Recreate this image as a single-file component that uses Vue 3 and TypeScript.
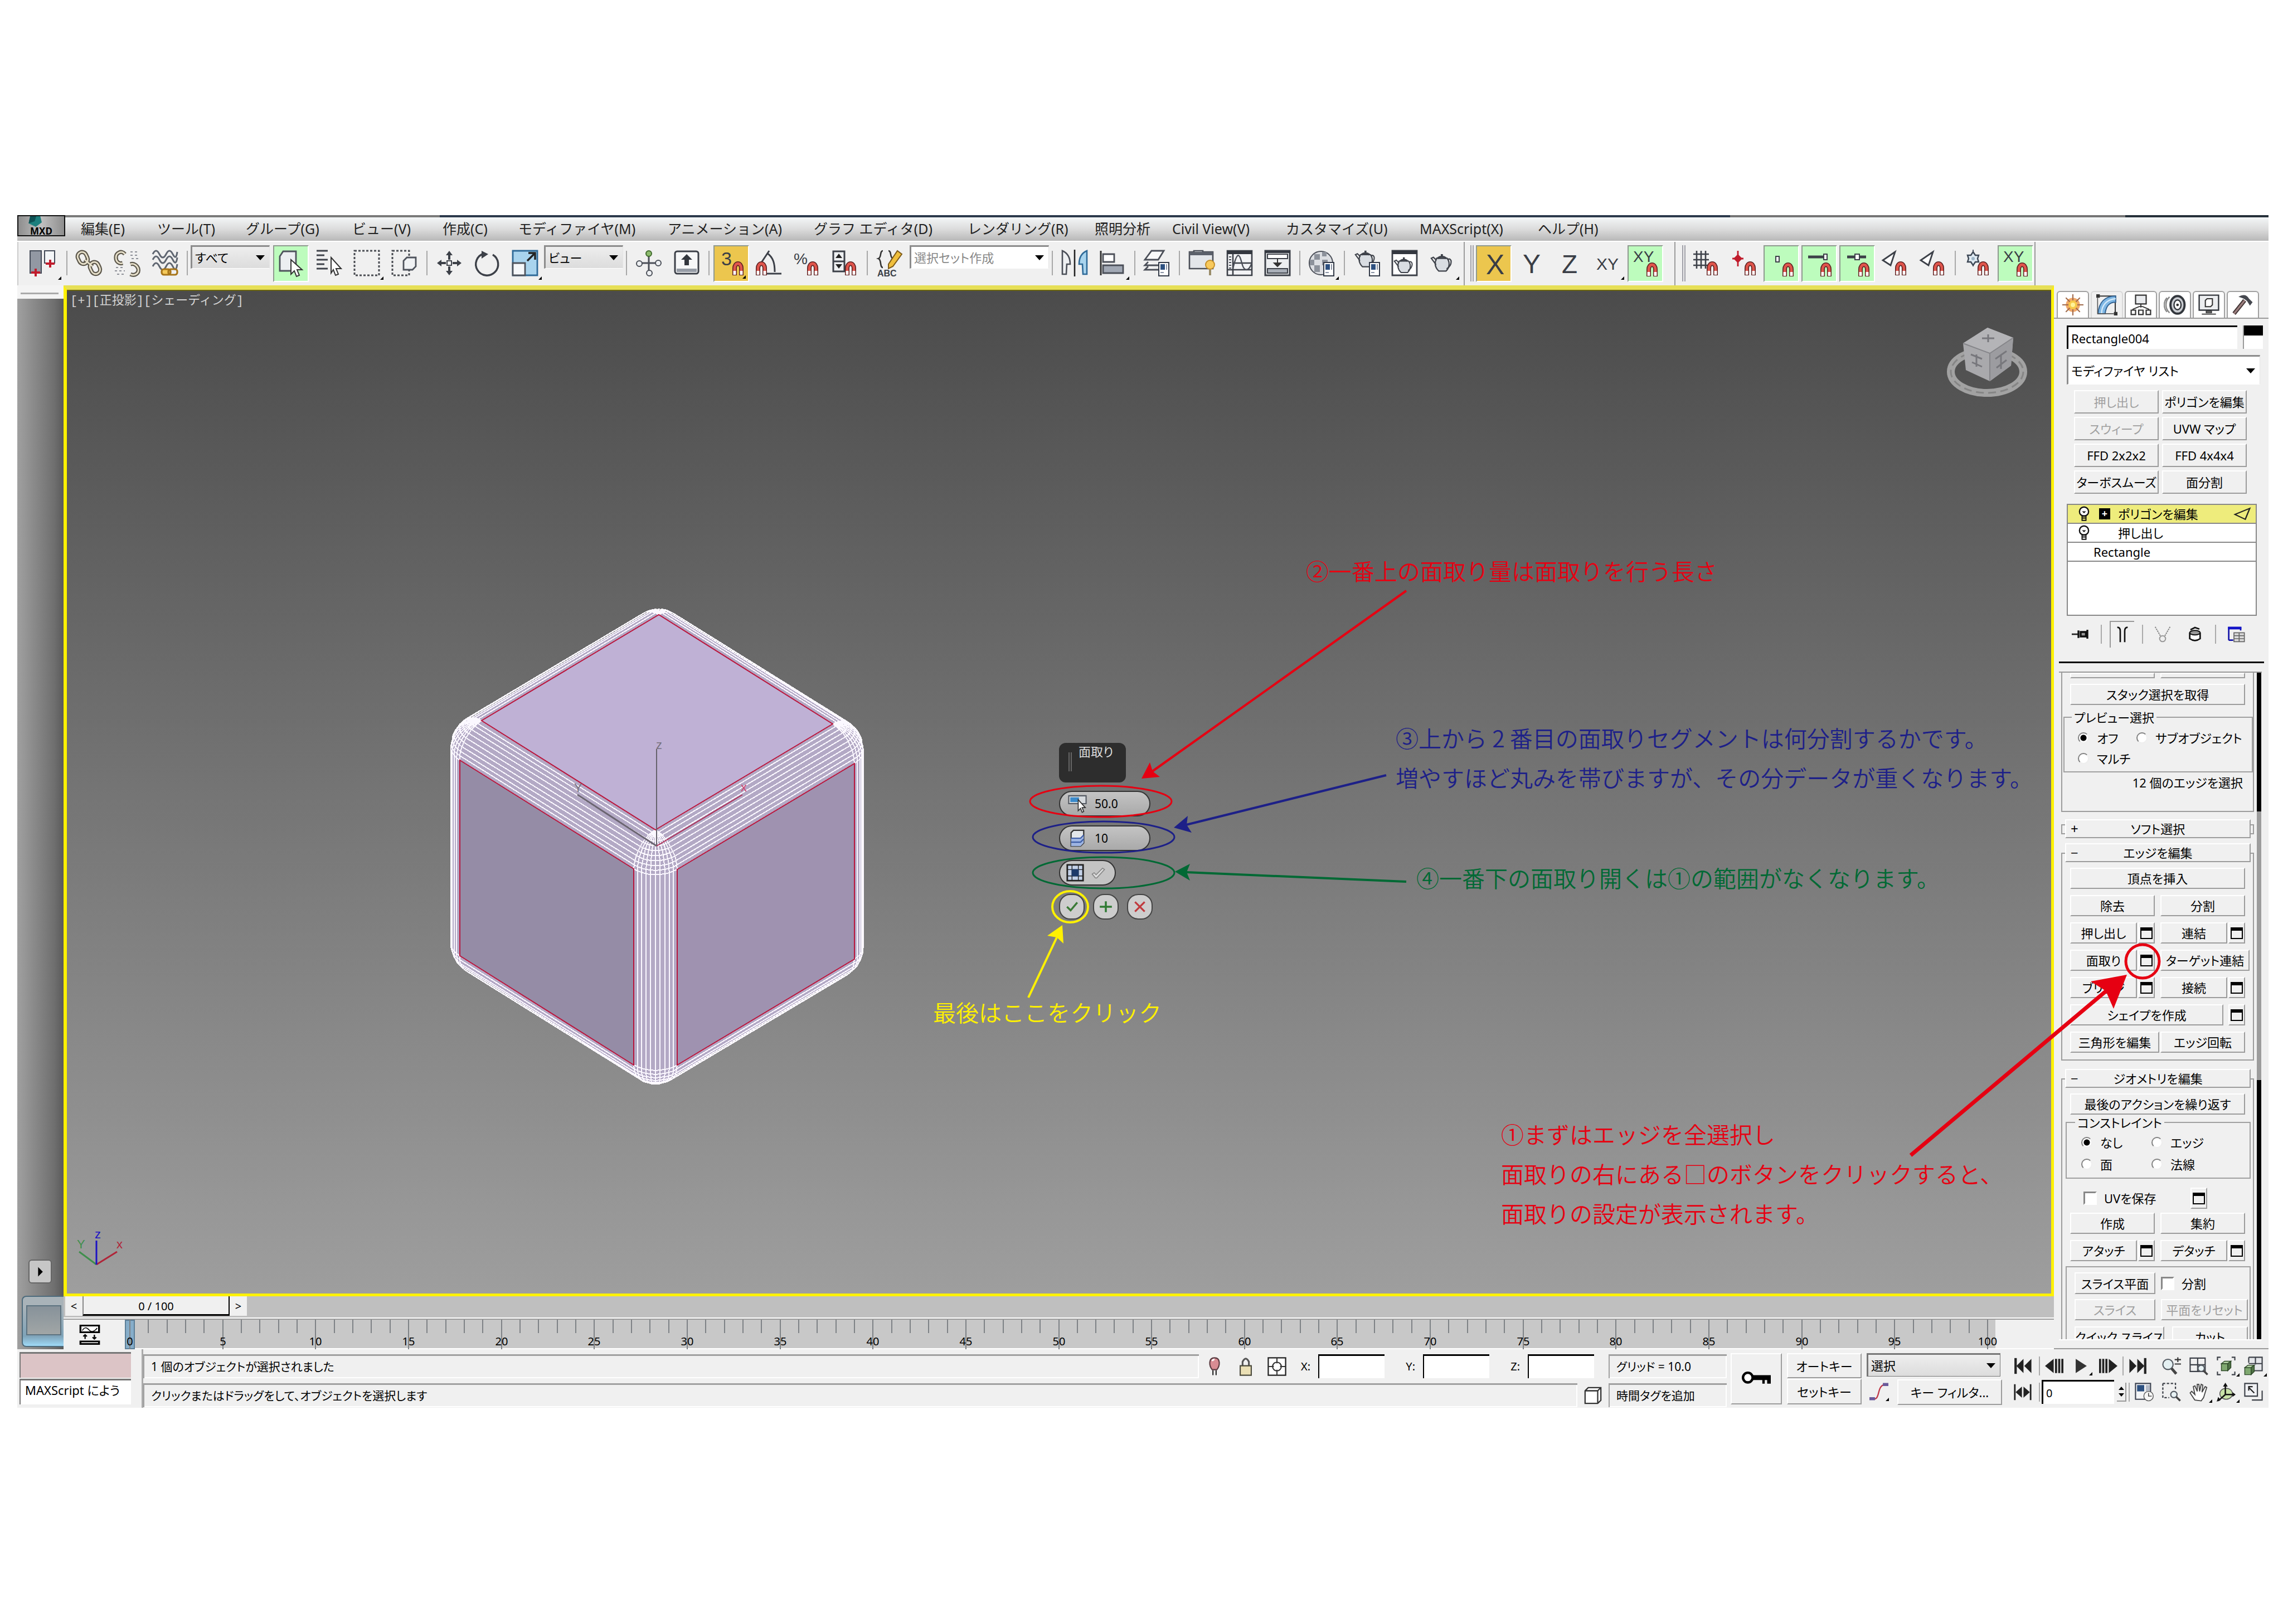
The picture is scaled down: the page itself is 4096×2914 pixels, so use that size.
<script setup lang="ts">
import { ref } from 'vue'

interface Item { icon: string; label: string; on?: 'green' | 'gold'; more?: boolean }

const menus = ['編集(E)', 'ツール(T)', 'グループ(G)', 'ビュー(V)', '作成(C)', 'モディファイヤ(M)', 'アニメーション(A)', 'グラフ エディタ(D)', 'レンダリング(R)', '照明分析', 'Civil View(V)', 'カスタマイズ(U)', 'MAXScript(X)', 'ヘルプ(H)']

const magnet = (x: number, y: number): string =>
  `<g transform="translate(${x} ${y})" fill="none"><path d="M2 12V5.500a3 4 0 0 1 6 0V12" stroke="#5a2020" stroke-width="4"/><path d="M2 11.500V5.500a3 4 0 0 1 6 0v6" stroke="#e0554c" stroke-width="2.400"/><path d="M2 8v3.500M8 8v3.500" stroke="#fff" stroke-width="2.400"/></g>`
const label = (x: number, y: number, size: number, s: string, extra = ''): string =>
  `<text x="${x}" y="${y}" font-size="${size}" fill="#3a3e46" font-family="Liberation Sans, sans-serif" ${extra}>${s}</text>`
const page = (x: number, y: number): string =>
  `<g transform="translate(${x} ${y})"><rect x=".5" y=".5" width="9" height="12" fill="#fff" stroke="#333a48"/><rect x="2" y="2" width="4" height="5" fill="#2d5080"/><path d="M7.500 2v5M2 9.500h3" stroke="#8a93a5"/></g>`
const pot = (x: number, y: number, k: number): string =>
  `<g transform="translate(${x} ${y}) scale(${k})" stroke="#3f434b" stroke-width="1.200" fill="#d9dde2"><path d="M6 5h10c3 4 2 9-1 12H8C4 13 4 9 6 5Z"/><path d="M5.500 11 1 5l2-1 3 3M16.500 6c4-2 5 5-1 9" fill="none"/><path d="M7 5q4-3 8 0M11 3V1" fill="none" stroke-width="2"/></g>`
const lens = (x: number, y: number): string =>
  `<circle cx="${x}" cy="${y}" r="4" fill="#e8f2f4" stroke="#555b63" stroke-width="1.500"/><path d="m${x + 3} ${y + 3} 5 5" stroke="#444" stroke-width="2.500"/>`
const cube = (x: number, y: number): string =>
  `<g transform="translate(${x} ${y})" stroke="#2f4a2a"><path d="M1 4h8v9H1z" fill="#7fa870"/><path d="m1 4 4-3h8L9 4z" fill="#b5d3a6"/><path d="m9 4 4-3v8l-4 4z" fill="#4f7345"/></g>`

const icons: Record<string, string> = {
  undo: `<path d="M1 1h10v20H1z" fill="#9298a3" stroke="#444b58"/><path d="M14 1h9v11h-9z" fill="#f4f6f8" stroke="#444b58"/><path d="M6 17v7M2 20.500h8M19 9v7M15 12.500h8" stroke="#c01c2c" stroke-width="2"/>`,
  link: `<g fill="none" stroke="#5d584c" stroke-width="3.600"><rect x="2" y="2" width="8" height="11" rx="4" transform="rotate(-25 6 7)"/><rect x="13" y="11" width="8" height="11" rx="4" transform="rotate(-25 17 16)"/><path d="m8 9 7 6"/></g><g fill="none" stroke="#e9e2cc" stroke-width="1.400"><rect x="2" y="2" width="8" height="11" rx="4" transform="rotate(-25 6 7)"/><rect x="13" y="11" width="8" height="11" rx="4" transform="rotate(-25 17 16)"/><path d="m8 9 7 6"/></g>`,
  unlink: `<g fill="none" stroke="#5d584c" stroke-width="3.600"><path d="M10 4C7 0 2 3 2 7s3 6 6 5M15 22c4 2 8-1 7-5-1-3-4-5-7-4"/></g><g fill="none" stroke="#e9e2cc" stroke-width="1.400"><path d="M10 4C7 0 2 3 2 7s3 6 6 5M15 22c4 2 8-1 7-5-1-3-4-5-7-4"/></g><path d="M15 2h8M15 5h7M16 8h7M2 16h8M1 19h9M3 22h7" stroke="#8d9098" stroke-dasharray="2 2"/>`,
  bind: `<path d="M1 4q3-6 6 0t6 0 6 0 4-2M1 9q3-6 6 0t6 0 6 0 4-2M1 15q3-6 6 0t6 0 6 0 4-2" fill="none" stroke="#5f6671" stroke-width="1.500"/><rect x="9" y="17.500" width="8" height="5" rx="2" fill="#f4c95a" stroke="#a8761a" stroke-width="1.600"/><rect x="15" y="17.500" width="8" height="5" rx="2" fill="none" stroke="#a8761a" stroke-width="1.600"/>`,
  select: `<path d="M2 6 5 1.500h11.500V16l-2 3H2z" fill="#eceef1" stroke="#4e535c" stroke-width="1.400"/><path d="m12 9 10 9h-4.500l2 5-2.500 1-2-5-3 3z" fill="#fff" stroke="#333"/>`,
  byname: `<path d="M1 1h10M1 5h7M1 9h10M1 13h7M1 17h10" stroke="#3f434b" stroke-width="1.500"/><path d="m14 7 9 10h-4.500l2 5-2.500 1-2-5-2 3z" fill="#fff" stroke="#333"/>`,
  marquee: `<path d="M1 1h22v22H1z" fill="none" stroke="#4a4d53" stroke-width="1.500" stroke-dasharray="2 1.500"/>`,
  crossing: `<path d="M1 1h15v22H1z" fill="none" stroke="#4a4d53" stroke-width="1.500" stroke-dasharray="2 1.500"/><path d="M11 10l3-3h8v8l-3 3h-8z" fill="#f0f2f4" stroke="#4e535c" stroke-width="1.400"/>`,
  move: `<g fill="#3c4048"><path d="m12 1 3 4h-2v4h-2V5H9zM12 23l3-4h-2v-4h-2v4H9zM1 12l4-3v2h4v2H5v2zM23 12l-4-3v2h-4v2h4v2z"/></g><path d="M10 10h4v4h-4z" fill="#fff" stroke="#3c4048"/>`,
  rotate: `<path d="M9 3.500a10 10 0 1 0 8 1" fill="none" stroke="#3c4048" stroke-width="1.700"/><path d="M7 1v7l6-4z" fill="#3c4048"/>`,
  scale: `<path d="M1 1h22v22H1z" fill="#a9d4ee" stroke="#2f6a98" stroke-width="1.400"/><path d="M1 12h11v11H1z" fill="#f6f8fa" stroke="#4e535c" stroke-width="1.400"/><path d="m14 10 6-6m-5-1h6v6" fill="none" stroke="#222" stroke-width="1.700"/>`,
  pivot: `<path d="M12 5v15M5 12h14" stroke="#4b4f58" stroke-width="1.500"/><circle cx="12" cy="3.500" r="2.500" fill="#8dbb6d" stroke="#3f6a2c"/><g fill="#eef0f3" stroke="#4b4f58"><circle cx="3.500" cy="12.500" r="2.500"/><circle cx="20.500" cy="12" r="2.500"/><circle cx="12.500" cy="21" r="2.500"/></g>`,
  keyboard: `<rect x="1.500" y="1.500" width="21" height="20" rx="2" fill="#f6f7f8" stroke="#3c4048" stroke-width="1.500"/><path d="M3 17h18v3H3z" fill="#969ca6"/><path d="m12 4 5 5h-3v5h-4V9H7z" fill="#33373e"/>`,
  snap3: label(3, 14, 17, '3') + magnet(13, 11),
  angle: `<path d="M4 13 12 1M10 3c6 4 7 10 7 17M9 21.500h14" stroke="#3c4048" stroke-width="1.500" fill="none"/>` + magnet(0, 11),
  percent: label(0, 13, 14, '%') + magnet(12, 11),
  spinner: `<path d="M1.500 1.500h10v18h-10zM1.500 10.500h10" fill="#eef0f2" stroke="#3c4048" stroke-width="1.500"/><path d="m6.500 3.500 3 4h-6zM6.500 17l3-4h-6z" fill="#222"/>` + magnet(12, 11),
  named: `<path d="M6 1C3 1 5 7 2 8c3 1 1 8 4 8M11 1c3 0 1 6 4 7-3 1-1 8-4 8" fill="none" stroke="#333" stroke-width="1.300"/><path d="m11 13 8-12 4 3-8 11-4 2z" fill="#f0bf3c" stroke="#7d5a18"/>` + label(1, 24, 8, 'ABC', 'font-weight="bold"'),
  mirror: `<path d="M1 1q7 3 7 12H5l-.500 9H1z" fill="#eef0f2" stroke="#4b4f58" stroke-width="1.300"/><path d="M23 1q-7 3-7 12h3l.500 9H23z" fill="#a9d4ee" stroke="#2f6a98" stroke-width="1.300"/><path d="M12 0v24" stroke="#222" stroke-width="1.300"/>`,
  align: `<path d="M1.500 1v22" stroke="#333" stroke-width="1.500"/><path d="M3.500 4h10v7h-10z" fill="#fff" stroke="#4b4f58" stroke-width="1.400"/><path d="M3.500 14h18v7h-18z" fill="#a1a8b4" stroke="#4b4f58" stroke-width="1.400"/>`,
  layers: `<path d="m1 9 6-8h11l-5 8zM4 11l-3 3h12M4 15l-3 3h12" fill="#fafafa" stroke="#4b4f58" stroke-width="1.400"/>` + page(13, 11),
  ribbon: `<path d="M1 2h4V1h8v1h9v15H1z" fill="#e3e6ea" stroke="#4b4f58" stroke-width="1.300"/><path d="M1 2h21v3H1z" fill="#5b606a"/><circle cx="19.500" cy="13.500" r="4" fill="#f8c95c" stroke="#c48f2a"/><path d="M19.500 18v5" stroke="#9a8c6a" stroke-width="2"/>`,
  curve: `<path d="M1 1h22v22H1zM6 4v19M1 18h22M6 12h17" fill="#f2f3f5" stroke="#3c4048" stroke-width="1.300"/><path d="M1 1h22v3H1z" fill="#33373f"/><path d="M6 17C10 0 12 4 14 12s6 8 9 0" fill="none" stroke="#4b4f58" stroke-width="1.200"/><path d="M3.500 6v11" stroke="#4b4f58" stroke-width="2" stroke-dasharray="1 1.500"/>`,
  schematic: `<path d="M1 1h22v22H1z" fill="#eceef0" stroke="#3c4048" stroke-width="1.500"/><path d="M1 1h22v2H1z" fill="#33373f"/><path d="M3 4h18v4H3z" fill="#fff" stroke="#3c4048"/><path d="M3 17h18v4H3z" fill="#a9afb8" stroke="#3c4048"/><path d="M12 8v6m-3-2h6l-3 3z" fill="#333" stroke="#333"/>`,
  material: `<circle cx="11" cy="12" r="10.500" fill="#dcdee2" stroke="#4b4f58"/><path d="M5 4h5v5H5zM12 9h5v5h-5zM5 14h5v6H5zM12 2h4v4h-4zM1 9h4v5H1z" fill="#8d929b"/>` + page(13, 11),
  rsetup: pot(1, 0, 0.9) + page(14, 11),
  rframe: `<path d="M1 1h22v22H1z" fill="#fff" stroke="#3c4048" stroke-width="1.400"/><path d="M1 1h22v3H1z" fill="#33373f"/>` + pot(2, 6, 0.85),
  render: pot(1, 3, 0.95),
  axX: label(5, 22, 25, 'X'),
  axY: label(4, 21, 24, 'Y'),
  axZ: label(5, 21, 23, 'Z'),
  axXY: label(2, 18, 15, 'XY'),
  xysnap: label(1, 11, 14, 'XY') + magnet(13, 12),
  grid: `<path d="M1 4h14M1 9h14M1 14h14M4 1v16M8 1v16M12 1v16" stroke="#3c4048" stroke-width="1.300"/>` + magnet(13, 11),
  pivotsnap: `<path d="M7 1v14M2 8h10" stroke="#c01c2c" stroke-width="1.400"/><path d="m7 4 4 4-4 4-4-4z" fill="#c01c2c"/>` + magnet(13, 11),
  vertex: `<path d="M7 6h3v5H7z" fill="#fff" stroke="#3c4048"/>` + magnet(13, 12),
  endpoint: `<path d="M2 6.500h14" stroke="#3c4048" stroke-width="2.500"/><path d="M16 4h3v5h-3z" fill="#fff" stroke="#3c4048"/>` + magnet(13, 12),
  midpoint: `<path d="M3 6.500h17" stroke="#3c4048" stroke-width="2.500"/><path d="M10 4h4v5h-4z" fill="#fff" stroke="#3c4048"/>` + magnet(13, 12),
  face: `<path d="M12 2 1 9.500l7 4.500z" fill="#fff" stroke="#3c4048" stroke-width="1.400"/>` + magnet(12, 11),
  freeze: `<path d="M8 0v15" stroke="#4b5563"/><path d="m8 2 2 3h3l-1 3 1 3h-3l-2 3-2-3H3l1-3-1-3h3z" fill="#dfeaf2" stroke="#3c4654" stroke-width="1.200"/><circle cx="8" cy="8" r="1.500" fill="#9fb6c8"/>` + magnet(12, 11),
  create: `<circle cx="12" cy="12" r="8" fill="#f0a868"/><path d="M12 0v24M0 12h24M4 4l16 16M20 4 4 20" stroke="#a06a4c" stroke-width="1.300"/><circle cx="12" cy="12" r="5" fill="#f7c948"/><circle cx="12" cy="12" r="2.500" fill="#fff39a"/>`,
  modify: `<path d="M1.500 2h20v20" fill="none" stroke="#333" stroke-width="1.300"/><path d="M2 22C3 9 10 2 22 2v7c-8 0-11 5-12 13z" fill="#7fb7e4" stroke="#2f5f8f" stroke-width="1.200"/><path d="M6 22C6 12 12 6 22 5" stroke="#d6ebfa" stroke-width="1.500" fill="none"/><path d="M0 0h4v4H0zM20 20h4v4h-4z" fill="#333"/><path d="M1.500 4v18H20" stroke="#555" fill="none"/>`,
  hier: `<path d="M6 1h12v10H6z" fill="#e9ebee" stroke="#333" stroke-width="1.400"/><path d="M12 11v4M3 19v-2l7-3h4l7 3v2" fill="none" stroke="#333" stroke-width="1.200"/><path d="M1 18h5v5H1zM9.500 18h5v5h-5zM18 18h5v5h-5z" fill="#fff" stroke="#333" stroke-width="1.400"/>`,
  motion: `<path d="M6 3a12 12 0 0 0 0 18M3 4a12 12 0 0 0 0 16" stroke="#888" fill="none" stroke-width="1.500"/><ellipse cx="15" cy="12" rx="8" ry="10" fill="#c9ccd1" stroke="#33373d" stroke-width="2.500"/><ellipse cx="15" cy="12" rx="4" ry="5.500" fill="#fff" stroke="#33373d" stroke-width="1.500"/><circle cx="15" cy="12" r="1.500" fill="#333"/>`,
  display: `<path d="M1 1h22v17H1z" fill="#eceef0" stroke="#33373d" stroke-width="1.500"/><path d="M8 7l2-2h6v7l-2 2H8z" fill="#fff" stroke="#333" stroke-width="1.300"/><path d="M9 19h6v2H9zM4 22.500h16" fill="#888" stroke="#333"/>`,
  hammer: `<path d="m2 22 12-15" stroke="#3c2f2f" stroke-width="4.500"/><path d="m2 22 12-15" stroke="#9a7d7d" stroke-width="2.200"/><path d="M7 3c5-3 9-3 12 2l4 4-3 4-3-5c-3-3-6-4-10-5z" fill="#45484f"/>`,
  pin: `<path d="M0 12h9" stroke="#222" stroke-width="2"/><path d="M9 7v10M12 9h7v6h-7zM21 6v12" stroke="#111" stroke-width="2.500" fill="#999"/>`,
  result: `<path d="M5 2q4 0 4 5v15M19 2q-4 0-4 5v15" fill="none" stroke="#111" stroke-width="2"/>`,
  unique: `<path d="m2 2 8 14M22 2l-8 14" stroke="#888" stroke-width="1.500" stroke-dasharray="2 1"/><circle cx="12" cy="18" r="4" fill="#eee" stroke="#999" stroke-width="1.500"/>`,
  trash: `<path d="M5 10v8q7 5 14 0v-8" fill="#fff" stroke="#111" stroke-width="2"/><ellipse cx="12" cy="10" rx="7" ry="3" fill="#999" stroke="#111" stroke-width="1.500"/><path d="m6 6 6-3 6 2" fill="none" stroke="#111" stroke-width="2"/>`,
  config: `<path d="M2 20V3h16v4M2 20h6" fill="none" stroke="#1414a8" stroke-width="2"/><path d="M1 2h18v3.500H1z" fill="#1414c8"/><path d="M9 10h14v12H9zM9 14h14M9 18h14M16 10v12" fill="#ddd" stroke="#666" stroke-width="1.300"/>`,
  bulb: `<circle cx="12" cy="8.500" r="7" fill="#fff" stroke="#111" stroke-width="2"/><path d="M9 15h6v7H9zM9 18.500h6M10 8l2 2 2-2" fill="none" stroke="#111" stroke-width="1.700"/>`,
  toggle: `<path d="m22 3-6 18L2 13z" fill="none" stroke="#222" stroke-width="1.800"/>`,
  first: `<path d="M3 2v20" stroke="#222" stroke-width="3"/><path d="M13 3v18L4 12zM23 3v18l-9-9z" fill="#222"/>`,
  prev: `<path d="M11 3v18L0 12z" fill="#222"/><path d="M14 3v18M18 3v18M22 3v18" stroke="#222" stroke-width="2.600"/>`,
  play: `<path d="M5 3v18l14-9z" fill="#333"/>`,
  next: `<path d="M13 3v18l11-9z" fill="#222"/><path d="M2 3v18M6 3v18M10 3v18" stroke="#222" stroke-width="2.600"/>`,
  last: `<path d="M21 2v20" stroke="#222" stroke-width="3"/><path d="M1 3v18l9-9zM11 3v18l9-9z" fill="#222"/>`,
  keymode: `<path d="M2 2v20M22 2v20" stroke="#222" stroke-width="2"/><path d="M11 5v14l-8-7zM13 5v14l8-7z" fill="#222"/>`,
  timecfg: `<path d="M1 1h19v20H1z" fill="#f3f4f6" stroke="#3c4250" stroke-width="1.500"/><path d="M3 3h9v8H3z" fill="#2d5080"/><path d="M14 3h5v8h-5z" fill="#b4bac6"/><circle cx="17.500" cy="17" r="6" fill="#f6f6f6" stroke="#555"/><path d="M17.500 13v4h4" stroke="#333" fill="none"/>`,
  zoom: `<circle cx="7.500" cy="10" r="6.500" fill="#e4f0f2" stroke="#555b63" stroke-width="1.500"/><path d="m12 15 6 7" stroke="#444" stroke-width="3.500"/><path d="M20 1v6M16 4h8M16 9.500h8" stroke="#333" stroke-width="1.500"/>`,
  zoomall: `<path d="M1 2h19v17H1zM10.500 2v17M1 10.500h19" fill="none" stroke="#3c4048" stroke-width="1.500"/>` + lens(15, 15),
  extents: `<path d="M1 5V1h4M19 1h4v4M1 19v4h4M19 23h4v-4" fill="none" stroke="#3c4048" stroke-width="1.500"/>` + cube(5, 5),
  extall: `<path d="M6 1h17v17H12M14.500 1v9M6 9h17M6 1v7" fill="#e4e6ea" stroke="#3c4048" stroke-width="1.500"/>` + cube(0, 10),
  region: `<path d="M1 1h16v9M1 1v18h8" fill="none" stroke="#3c4048" stroke-width="1.600" stroke-dasharray="3 2"/>` + lens(15, 15),
  pan: `<path d="m7 22-6-9 2-2 4 4L5 5l2-1 3 7V2h2l1 9 2-9 2 1-1 9 4-7 2 1-4 13-3 4z" fill="#fff" stroke="#444" stroke-width="1.300"/>`,
  orbit: `<ellipse cx="12" cy="14" rx="8" ry="7" fill="#c8e2a8" stroke="#555"/><path d="M11 2v13h12M11 15l-9 8" fill="none" stroke="#111" stroke-width="1.800"/><path d="m11 0 3 5H8zM24 15l-4-3v6zM0 24l2-6 3 4z" fill="#111"/>`,
  maximize: `<path d="M10 22h13V10" fill="none" stroke="#3c4048" stroke-width="1.500"/><path d="M1 1h16v16H1z" fill="#f0f1f4" stroke="#3c4048" stroke-width="1.500"/><path d="m13 13-7-7m0 4V5h5" fill="none" stroke="#222" stroke-width="1.500"/>`,
  marker: `<path d="M12 1c-8 0-7 10-3 15h6c4-5 5-15-3-15Z" fill="#d98c93" stroke="#5a3a40" stroke-width="1.500"/><path d="M10 17v6M14 17v6" stroke="#222" stroke-width="1.500"/><path d="M9 5q1-2 3-2" stroke="#fff" stroke-width="2" fill="none"/>`,
  lock: `<path d="M8 12V6q4-8 8 0v6" fill="none" stroke="#555" stroke-width="2.200"/><path d="M5 11h14v12H5z" fill="#eadfb4" stroke="#4b4a3c" stroke-width="1.500"/>`,
  absrel: `<path d="M1 1h22v22H1z" fill="#fff" stroke="#222" stroke-width="1.600"/><circle cx="12" cy="12" r="5.500" fill="none" stroke="#333" stroke-width="1.500"/><path d="M12 1v7M12 16v7M1 12h7M16 12h7" stroke="#333" stroke-width="1.400"/>`,
  isolate: `<path d="M2 6l4-4h16v16l-4 4H2zM2 6h16v16M18 6l4-4" fill="#fff" stroke="#333" stroke-width="1.600"/>`,
  key: `<circle cx="5" cy="11" r="4" fill="#fff" stroke="#000" stroke-width="2"/><path d="M9 9h15v7h-3v-3h-2v3h-2v-3H9z"/>`,
  tangent: `<path d="M3 21c12 4 5-17 17-18" fill="none" stroke="#c03848" stroke-width="1.600"/><path d="M0 19h7v4H0zM17 1h7v4h-7z" fill="#6a5a9a"/>`,
  ministrip: `<path d="M2 1h20v8H2z" fill="#fff" stroke="#000" stroke-width="2"/><path d="M4 7q3-6 7-1t9-2" fill="none" stroke="#000"/><path d="M7 17v-5m-2 2 2-2 2 2M17 12v5m-2-2 2 2 2-2" fill="none" stroke="#000" stroke-width="1.400"/><path d="M2 20h20v3H2z" fill="#fff" stroke="#000" stroke-width="2"/>`,
  amount: `<path d="M1 2h22v10H1z" fill="#d6dade" stroke="#555a63" stroke-width="1.500"/><path d="M3 4h11v6H3z" fill="#3a8acb"/><path d="m13 7 9 10h-4l2 5-2 1-2-5-3 3z" fill="#fff" stroke="#333" stroke-width="1.200"/>`,
  segs: `<path d="M4 5l3-3h13v16l-4 4H4z" fill="#e2e6ea" stroke="#333" stroke-width="1.600"/><path d="M4 12h12l4-3v9l-4 4H4z" fill="#9db4e2"/><path d="M4 12h12l4-4M4 17h12l4-4" fill="none" stroke="#3b5ba5" stroke-width="1.500"/>`,
  open: `<path d="M2 2h20v20H2z" fill="#c3d1e8" stroke="#222" stroke-width="2"/><path d="M8 2v20M16 2v20M2 8h20M2 16h20" stroke="#222"/><path d="M7.500 7.500h9v9h-9z" fill="#1d3a6a"/>`,
  ghost: `<path d="m3 14 3-2 3 3L19 5l3 2L10 20H8z" fill="#ddd" stroke="#888" stroke-width="1.400"/>`,
  ok: `<path d="m4 12 6 6L21 5" fill="none" stroke="#3a7a36" stroke-width="3.200"/>`,
  plus: `<path d="M12 3v18M2 12h20" stroke="#2f7a33" stroke-width="3.200"/>`,
  cancel: `<path d="m4 4 16 16M20 4 4 20" stroke="#c0393d" stroke-width="3"/>`,
}

const t = (icon: string, label: string, on?: 'green' | 'gold', more?: boolean): Item => ({ icon, label, on, more })
const g1 = [t('link', 'リンク'), t('unlink', 'リンク解除'), t('bind', 'バインド')]
const g2 = [t('select', '選択', 'green'), t('byname', '名前で選択'), t('marquee', '矩形', undefined, true), t('crossing', '交差')]
const g3 = [t('move', '移動'), t('rotate', '回転'), t('scale', 'スケール', undefined, true)]
const g4 = [t('pivot', '基点'), t('keyboard', 'キーボード')]
const g5 = [t('snap3', 'スナップ', 'gold', true), t('angle', '角度'), t('percent', 'パーセント'), t('spinner', 'スピナー')]
const tail: Item[][] = [
  [t('mirror', 'ミラー'), t('align', '位置合わせ', undefined, true)],
  [t('layers', 'レイヤ')],
  [t('ribbon', 'リボン'), t('curve', 'カーブ'), t('schematic', 'スケマティック')],
  [t('material', 'マテリアル', undefined, true)],
  [t('rsetup', 'レンダリング設定'), t('rframe', 'フレーム'), t('render', 'レンダリング', undefined, true)],
]
const axes = [t('axX', 'X 軸', 'gold'), t('axY', 'Y 軸'), t('axZ', 'Z 軸'), t('axXY', 'XY 平面', undefined, true), t('xysnap', 'XY スナップ', 'green')]
const snaps = [t('grid', 'グリッド'), t('pivotsnap', '基点'), t('vertex', '頂点', 'green'), t('endpoint', '端点', 'green'), t('midpoint', '中点', 'green'), t('face', '面'), t('face', '面の中心')]
const snaps2 = [t('freeze', 'フリーズ'), t('xysnap', '軸コンストレイント', 'green')]

const tabs = ['create', 'modify', 'hier', 'motion', 'display', 'hammer']
const modButtons = [['押し出し', true], ['ポリゴンを編集', false], ['スウィープ', true], ['UVW マップ', false], ['FFD 2x2x2', false], ['FFD 4x4x4', false], ['ターボスムーズ', false], ['面分割', false]] as [string, boolean][]
const preview = ref('off')
const constraint = ref('none')
const frame = ref('0')
const objectName = ref('Rectangle004')

const ticks = Array.from({ length: 101 }, (_, i) => ({ i, x: Math.round(233 + i * 33.33), major: i % 5 === 0 }))

/* Wireframe of the filleted box: orthographic projection, front-facing lines only. */
type V = [number, number, number]
const half: V = [224, 224, 205]
const R = 55
const project = (p: V): string => {
  const x = 1179 + 0.71 * p[0] - 0.698 * p[1]
  const y = 1519 - 0.424 * p[0] - 0.436 * p[1] - 0.8573 * p[2]
  return `${Math.round(x)} ${Math.round(y)}`
}
const facing = (n: V): boolean => -n[0] - n[1] + n[2] > -0.02
const on = (corner: V, n: V): V => [0, 1, 2].map(i => corner[i] * half[i] + n[i] * R) as V
const lines: string[] = []
const stroke = (corner: V, normals: V[]): void => {
  for (let i = 1; i < normals.length; i++) {
    if (facing(normals[i - 1]) && facing(normals[i])) lines.push(`M${project(on(corner, normals[i - 1]))}L${project(on(corner, normals[i]))}`)
  }
}
const S = 10
for (let axis = 0; axis < 3; axis++) {
  const a = (axis + 1) % 3
  const b = (axis + 2) % 3
  for (const sa of [-1, 1]) for (const sb of [-1, 1]) for (let k = 0; k <= S; k++) {
    const th = (k / S) * Math.PI / 2
    const n: V = [0, 0, 0]
    n[a] = sa * Math.cos(th)
    n[b] = sb * Math.sin(th)
    if (!facing(n)) continue
    const c1: V = [0, 0, 0]
    c1[a] = sa; c1[b] = sb; c1[axis] = -1
    const c2: V = [...c1] as V
    c2[axis] = 1
    lines.push(`M${project(on(c1, n))}L${project(on(c2, n))}`)
  }
}
for (const sx of [-1, 1]) for (const sy of [-1, 1]) for (const sz of [-1, 1]) {
  const at = (lat: number, lon: number): V => {
    const u = (lat / S) * Math.PI / 2
    const v = (lon / S) * Math.PI / 2
    return [sx * Math.cos(u) * Math.cos(v), sy * Math.cos(u) * Math.sin(v), sz * Math.sin(u)]
  }
  const idx = Array.from({ length: S + 1 }, (_, i) => i)
  for (const k of idx) {
    stroke([sx, sy, sz], idx.map(j => at(k, j)))
    stroke([sx, sy, sz], idx.map(j => at(j, k)))
  }
}
const wire = lines.join('')
const poly = (pts: V[]): string => pts.map(project).join(' ')
const [hx, hy, hz] = half
const hull = poly([[-hx, -hy, -hz], [hx, -hy, -hz], [hx, -hy, hz], [hx, hy, hz], [-hx, hy, hz], [-hx, hy, -hz]])
const topFace = poly([[-hx, -hy, hz + R], [hx, -hy, hz + R], [hx, hy, hz + R], [-hx, hy, hz + R]])
const leftFace = poly([[-hx - R, -hy, hz], [-hx - R, hy, hz], [-hx - R, hy, -hz], [-hx - R, -hy, -hz]])
const rightFace = poly([[-hx, -hy - R, hz], [hx, -hy - R, hz], [hx, -hy - R, -hz], [-hx, -hy - R, -hz]])
</script>

<template>
  <div class="page">
    <div class="app">
      <div class="title"><i></i><i></i><i></i><i></i></div>
      <header class="menubar">
        <div class="logo">
          <svg viewBox="0 0 40 22"><path d="M8 0h20l3 12-12 9L5 14z" fill="#1d7f7d" /><path d="M8 0h12l-3 10-12 4z" fill="#0f5154" /></svg>
          <b>MXD</b>
        </div>
        <nav><a v-for="m in menus" :key="m" href="#">{{ m }}</a></nav>
      </header>

      <div class="toolbar">
        <div class="bar bar-main">
          <button class="tool wide" aria-label="元に戻す"><svg viewBox="0 0 24 24" v-html="icons.undo"></svg><em></em></button>
          <s></s>
          <button v-for="i in g1" :key="i.icon" class="tool" :aria-label="i.label"><svg viewBox="0 0 24 24" v-html="icons[i.icon]"></svg></button>
          <s></s>
          <span class="sel filter"><select aria-label="選択フィルタ"><option>すべて</option></select></span>
          <button v-for="i in g2" :key="i.icon" class="tool" :class="i.on" :aria-label="i.label"><svg viewBox="0 0 24 24" v-html="icons[i.icon]"></svg><em v-if="i.more"></em></button>
          <s></s>
          <button v-for="i in g3" :key="i.icon" class="tool" :aria-label="i.label"><svg viewBox="0 0 24 24" v-html="icons[i.icon]"></svg><em v-if="i.more"></em></button>
          <span class="sel coord"><select aria-label="参照座標系"><option>ビュー</option></select></span>
          <s></s>
          <button v-for="i in g4" :key="i.icon" class="tool" :aria-label="i.label"><svg viewBox="0 0 24 24" v-html="icons[i.icon]"></svg></button>
          <s></s>
          <button v-for="i in g5" :key="i.icon" class="tool" :class="i.on" :aria-label="i.label"><svg viewBox="0 0 24 24" v-html="icons[i.icon]"></svg><em v-if="i.more"></em></button>
          <s></s>
          <button class="tool" aria-label="名前付き選択"><svg viewBox="0 0 24 24" v-html="icons.named"></svg></button>
          <span class="sel set"><select aria-label="選択セット"><option>選択セット作成</option></select></span>
          <template v-for="(g, n) in tail" :key="n">
            <s></s>
            <button v-for="i in g" :key="i.icon" class="tool" :aria-label="i.label"><svg viewBox="0 0 24 24" v-html="icons[i.icon]"></svg><em v-if="i.more"></em></button>
          </template>
        </div>
        <div class="bar bar-axes">
          <u></u>
          <button v-for="i in axes" :key="i.icon" class="tool" :class="i.on" :aria-label="i.label"><svg viewBox="0 0 24 24" v-html="icons[i.icon]"></svg><em v-if="i.more"></em></button>
        </div>
        <div class="bar bar-snaps">
          <u></u>
          <button v-for="i in snaps" :key="i.label" class="tool" :class="i.on" :aria-label="i.label"><svg viewBox="0 0 24 24" v-html="icons[i.icon]"></svg></button>
          <s></s>
          <button v-for="i in snaps2" :key="i.icon" class="tool" :class="i.on" :aria-label="i.label"><svg viewBox="0 0 24 24" v-html="icons[i.icon]"></svg></button>
        </div>
      </div>

      <div class="middle">
        <aside class="left">
          <div class="left-top"></div>
          <div class="left-fill"></div>
          <button class="expand" aria-label="展開"><svg viewBox="0 0 20 20"><path d="M7 3v14l7-7z" /></svg></button>
          <div class="thumb"><i></i></div>
        </aside>

        <main class="center">
          <section class="viewport">
            <svg class="scene" viewBox="120 520 3560 1801">
              <polygon :points="hull" fill="#b3a9c5" stroke="#b3a9c5" stroke-width="110" stroke-linejoin="round" />
              <path :d="wire" fill="none" stroke="#fbf8ff" stroke-width="2" shape-rendering="crispEdges" />
              <polygon :points="topFace" fill="#bfb1d5" stroke="#b8143c" stroke-width="2" />
              <polygon :points="leftFace" fill="#958ca6" stroke="#b8143c" stroke-width="2" />
              <polygon :points="rightFace" fill="#9f92b0" stroke="#b8143c" stroke-width="2" />
              <g fill="none" stroke-width="2">
                <path d="M1178 1518V1344" stroke="#66626c" />
                <path d="M1178 1518 1036 1426" stroke="#6a6470" stroke-width="3" />
                <path d="M1178 1518 1332 1426" stroke="#b03058" />
              </g>
              <g class="axis-label">
                <text x="1177" y="1344" fill="#77727e">z</text>
                <text x="1030" y="1421" fill="#77727e">Y</text>
                <text x="1329" y="1420" fill="#d04870">x</text>
              </g>
              <g fill="none" stroke-width="3">
                <path d="M173 2269 142 2246" stroke="#3f8f4c" />
                <path d="M173 2269 210 2246" stroke="#b02438" />
                <path d="M173 2269V2226" stroke="#1c12c4" />
              </g>
              <g class="axis-label">
                <text x="170" y="2222" fill="#1c12c4">z</text>
                <text x="138" y="2240" fill="#3f8f4c">Y</text>
                <text x="209" y="2240" fill="#b02438">x</text>
              </g>
              <g>
                <ellipse cx="3565" cy="667" rx="65" ry="38" fill="none" stroke="#a2a2a2" stroke-width="14" />
                <ellipse cx="3565" cy="667" rx="65" ry="38" fill="none" stroke="#858585" stroke-width="3" stroke-dasharray="14 8" />
                <path d="M3522 616 3566 588 3612 606 3608 656 3570 684 3527 664Z" fill="#a9a9ac" />
                <path d="M3522 616 3566 588 3612 606 3570 634Z" fill="#b4b4b7" />
                <path d="M3570 634 3612 606 3608 656 3570 684Z" fill="#9c9ca0" />
                <path d="M3522 616 3570 634 3612 606M3570 634V684" fill="none" stroke="#858589" stroke-width="2" />
                <path d="M3556 607h22M3567 600v14M3536 636l20 8M3538 650l18 8M3546 636v22M3580 644l20-14M3582 660l18-14M3590 636v26" fill="none" stroke="#77777c" stroke-width="3" />
              </g>
            </svg>
            <p class="vlabel">[+][正投影][シェーディング]</p>
            <form class="caddy" @submit.prevent>
              <div class="caddy-title"><i></i>面取り</div>
              <label class="pill"><svg viewBox="0 0 24 24" v-html="icons.amount"></svg><input value="50.0" aria-label="面取り量"></label>
              <label class="pill"><svg viewBox="0 0 24 24" v-html="icons.segs"></svg><input value="10" aria-label="面取りセグメント"></label>
              <button class="pill short" type="button" aria-label="面取りを開く"><svg viewBox="0 0 24 24" v-html="icons.open"></svg><svg viewBox="0 0 24 24" v-html="icons.ghost"></svg></button>
              <div class="caddy-actions">
                <button aria-label="OK"><svg viewBox="0 0 24 24" v-html="icons.ok"></svg></button>
                <button type="button" aria-label="適用"><svg viewBox="0 0 24 24" v-html="icons.plus"></svg></button>
                <button type="button" aria-label="キャンセル"><svg viewBox="0 0 24 24" v-html="icons.cancel"></svg></button>
              </div>
            </form>
          </section>
          <div class="slider">
            <button class="step" aria-label="前へ">&lt;</button><button class="knob">0 / 100</button><button class="step" aria-label="次へ">&gt;</button>
          </div>
          <div class="track">
            <button class="mini" aria-label="ミニ カーブ エディタ"><svg viewBox="0 0 24 24" preserveAspectRatio="none" v-html="icons.ministrip"></svg></button>
            <svg class="ruler" viewBox="224 2368 3461 53">
              <path d="M224 2368H3580V2419H224Z" fill="#c8c8c8" />
              <path d="M224 2419H3685V2421H224Z" fill="#fff" />
              <path d="M225 2369H241V2420H225Z" fill="#86adc9" stroke="#5d7f98" stroke-width="2" />
              <path v-for="k in ticks" :key="k.i" :d="`M${k.x} 2368V${k.major ? 2421 : 2392}`" stroke="#7e8286" stroke-width="2" />
              <template v-for="k in ticks" :key="k.i"><text v-if="k.major" :x="k.x" y="2414" text-anchor="middle">{{ k.i }}</text></template>
            </svg>
          </div>
        </main>

        <aside class="panel">
          <div class="tabs"><button v-for="n in tabs" :key="n" :class="{ active: n === 'modify' }" :aria-label="n"><svg viewBox="0 0 24 24" v-html="icons[n]"></svg></button></div>
          <div class="name-row"><input v-model="objectName" aria-label="オブジェクト名"><button class="swatch" aria-label="カラー"></button></div>
          <span class="sel modlist"><select aria-label="モディファイヤ"><option>モディファイヤ リスト</option></select></span>
          <div class="mod-grid"><button v-for="b in modButtons" :key="b[0]" class="btn" :disabled="b[1]">{{ b[0] }}</button></div>
          <ul class="stack">
            <li class="cur"><svg viewBox="0 0 24 24" v-html="icons.bulb"></svg><b>+</b><span>ポリゴンを編集</span><svg class="end" viewBox="0 0 24 24" preserveAspectRatio="none" v-html="icons.toggle"></svg></li>
            <li><svg viewBox="0 0 24 24" v-html="icons.bulb"></svg><span class="deep">押し出し</span></li>
            <li><span class="base">Rectangle</span></li>
          </ul>
          <div class="stack-tools">
            <button aria-label="スタックを固定"><svg viewBox="0 0 24 24" v-html="icons.pin"></svg></button><s></s>
            <button class="down" aria-label="最終結果を表示"><svg viewBox="0 0 24 24" v-html="icons.result"></svg></button><s></s>
            <button aria-label="固有にする"><svg viewBox="0 0 24 24" v-html="icons.unique"></svg></button>
            <button aria-label="削除"><svg viewBox="0 0 24 24" v-html="icons.trash"></svg></button><s></s>
            <button aria-label="設定"><svg viewBox="0 0 24 24" v-html="icons.config"></svg></button>
          </div>
          <hr>
          <div class="scroll">
            <div class="rolls">
              <section class="roll first">
                <div class="pair cut"><button class="btn" aria-label="縮小"></button><button class="btn" aria-label="拡大"></button></div>
                <button class="btn full">スタック選択を取得</button>
                <fieldset class="preview">
                  <legend>プレビュー選択</legend>
                  <label><input v-model="preview" type="radio" name="pv" value="off">オフ</label>
                  <label><input v-model="preview" type="radio" name="pv" value="sub">サブオブジェクト</label>
                  <label><input v-model="preview" type="radio" name="pv" value="multi">マルチ</label>
                </fieldset>
                <p>12 個のエッジを選択</p>
              </section>
              <section class="roll closed"><button class="head"><b>+</b>ソフト選択</button></section>
              <section class="roll edges">
                <button class="head"><b>−</b>エッジを編集</button>
                <div class="rows">
                  <button class="btn">頂点を挿入</button>
                  <div class="pair"><button class="btn">除去</button><button class="btn">分割</button></div>
                  <div class="pair"><div class="opt"><button class="btn">押し出し</button><button class="box" aria-label="押し出し設定"></button></div><div class="opt"><button class="btn">連結</button><button class="box" aria-label="連結設定"></button></div></div>
                  <div class="pair"><div class="opt"><button class="btn">面取り</button><button class="box" aria-label="面取り設定"></button></div><button class="btn over">ターゲット連結</button></div>
                  <div class="pair"><div class="opt"><button class="btn">ブリッジ</button><button class="box" aria-label="ブリッジ設定"></button></div><div class="opt"><button class="btn">接続</button><button class="box" aria-label="接続設定"></button></div></div>
                  <div class="opt far"><button class="btn">シェイプを作成</button><button class="box" aria-label="シェイプ設定"></button></div>
                  <div class="pair tri"><button class="btn">三角形を編集</button><button class="btn">エッジ回転</button></div>
                </div>
              </section>
              <section class="roll geo">
                <button class="head"><b>−</b>ジオメトリを編集</button>
                <button class="btn full">最後のアクションを繰り返す</button>
                <fieldset class="constraint">
                  <legend>コンストレイント</legend>
                  <label><input v-model="constraint" type="radio" name="cs" value="none">なし</label>
                  <label><input v-model="constraint" type="radio" name="cs" value="edge">エッジ</label>
                  <label><input v-model="constraint" type="radio" name="cs" value="face">面</label>
                  <label><input v-model="constraint" type="radio" name="cs" value="normal">法線</label>
                </fieldset>
                <div class="uv"><label><input type="checkbox">UVを保存</label><button class="box" aria-label="UV 設定"></button></div>
                <div class="rows">
                  <div class="pair"><button class="btn">作成</button><button class="btn">集約</button></div>
                  <div class="pair"><div class="opt"><button class="btn">アタッチ</button><button class="box" aria-label="アタッチ設定"></button></div><div class="opt"><button class="btn">デタッチ</button><button class="box" aria-label="デタッチ設定"></button></div></div>
                </div>
                <div class="slice">
                  <div class="pair"><button class="btn">スライス平面</button><label><input type="checkbox">分割</label></div>
                  <div class="pair"><button class="btn" disabled>スライス</button><button class="btn" disabled>平面をリセット</button></div>
                  <div class="pair quick"><button class="btn">クイック スライス</button><button class="btn">カット</button></div>
                </div>
              </section>
            </div>
            <div class="scrollbar"><i></i></div>
          </div>
        </aside>
      </div>

      <footer class="status">
        <div class="macro"><div class="pink"></div><div class="white">MAXScript によう</div></div>
        <div class="lines">
          <div class="line">
            <div class="field">1 個のオブジェクトが選択されました</div>
            <button class="ic" aria-label="マーカー"><svg viewBox="0 0 24 24" v-html="icons.marker"></svg></button>
            <button class="ic" aria-label="選択ロック"><svg viewBox="0 0 24 24" v-html="icons.lock"></svg></button>
            <button class="ic" aria-label="絶対モード"><svg viewBox="0 0 24 24" v-html="icons.absrel"></svg></button>
            <label>X:<input></label><label>Y:<input></label><label>Z:<input></label>
          </div>
          <div class="line">
            <div class="field">クリックまたはドラッグをして、オブジェクトを選択します</div>
            <button class="ic" aria-label="分離"><svg viewBox="0 0 24 24" v-html="icons.isolate"></svg></button>
          </div>
        </div>
        <div class="gridinfo"><div class="field">グリッド = 10.0</div><div class="field">時間タグを追加</div></div>
        <button class="btn keybtn" aria-label="キーを設定"><svg viewBox="0 0 24 24" v-html="icons.key"></svg></button>
        <div class="autokey"><button class="btn">オートキー</button><button class="btn">セットキー</button></div>
        <div class="keysel">
          <span class="sel"><select aria-label="キー対象"><option>選択</option></select></span>
          <div><button class="ic" aria-label="接線"><svg viewBox="0 0 24 24" v-html="icons.tangent"></svg><em></em></button><button class="btn">キー フィルタ...</button></div>
        </div>
        <div class="transport">
          <div>
            <button class="ic" aria-label="最初"><svg viewBox="0 0 24 24" v-html="icons.first"></svg></button><s></s>
            <button class="ic" aria-label="前のフレーム"><svg viewBox="0 0 24 24" v-html="icons.prev"></svg></button>
            <button class="ic" aria-label="再生"><svg viewBox="0 0 24 24" v-html="icons.play"></svg><em></em></button>
            <button class="ic" aria-label="次のフレーム"><svg viewBox="0 0 24 24" v-html="icons.next"></svg></button><s></s>
            <button class="ic" aria-label="最後"><svg viewBox="0 0 24 24" v-html="icons.last"></svg></button>
          </div>
          <div>
            <button class="ic" aria-label="キー モード"><svg viewBox="0 0 24 24" v-html="icons.keymode"></svg></button><s></s>
            <input v-model="frame" aria-label="フレーム">
            <button class="spin" aria-label="増減"><svg viewBox="0 0 12 24"><path d="m6 3 5 6H1zM6 21l5-6H1z" /></svg></button><s></s>
            <button class="ic" aria-label="時間設定"><svg viewBox="0 0 24 24" v-html="icons.timecfg"></svg></button>
          </div>
        </div>
        <div class="nav">
          <button v-for="n in ['zoom', 'zoomall', 'extents', 'extall', 'region', 'pan', 'orbit', 'maximize']" :key="n" class="ic" :aria-label="n"><svg viewBox="0 0 24 24" v-html="icons[n]"></svg><em v-if="['extents', 'extall', 'pan', 'orbit'].includes(n)"></em></button>
        </div>
      </footer>
    </div>

    <svg class="notes" viewBox="0 0 4096 2914">
      <g fill="none" stroke-width="3">
        <g stroke="#e60012"><ellipse cx="1975" cy="1438" rx="127" ry="28" /><path d="M2066 1385 2523 1060" stroke-width="4" /></g>
        <g stroke="#1d2088"><ellipse cx="1980" cy="1502" rx="127" ry="28" /><path d="M2128 1480 2487 1391" stroke-width="4" /></g>
        <g stroke="#006934"><ellipse cx="1980" cy="1566" rx="127" ry="28" /><path d="M2128 1565 2523 1582" stroke-width="4" /></g>
        <g stroke="#fff100"><ellipse cx="1920" cy="1627" rx="32" ry="28" stroke-width="4" /><path d="M1896 1682 1845 1790" stroke-width="4" /></g>
        <g stroke="#e60012"><circle cx="3844" cy="1725" r="30" stroke-width="5" /><path d="M3780 1777 3428 2073" stroke-width="7" /></g>
      </g>
      <path d="M2048 1397 2063 1368 2068 1384 2081 1394Z" fill="#e60012" />
      <path d="M2106 1485 2131 1464 2129 1480 2138 1494Z" fill="#1d2088" />
      <path d="M2108 1564 2135 1550 2129 1565 2135 1580Z" fill="#006934" />
      <path d="M1906 1660 1879 1679 1896 1682 1908 1693Z" fill="#fff100" />
      <path d="M3816 1749 3751 1761 3778 1778 3792 1810Z" fill="#e60012" />
      <g class="note" fill="#e60012">
        <text x="2343" y="1041">②一番上の面取り量は面取りを行う長さ</text>
        <text x="2693" y="2052">①まずはエッジを全選択し</text>
        <text x="2693" y="2123">面取りの右にある□のボタンをクリックすると、</text>
        <text x="2693" y="2194">面取りの設定が表示されます。</text>
      </g>
      <g class="note" fill="#1d2088">
        <text x="2504" y="1341">③上から 2 番目の面取りセグメントは何分割するかです。</text>
        <text x="2504" y="1412">増やすほど丸みを帯びますが、その分データが重くなります。</text>
      </g>
      <g class="note" fill="#006934"><text x="2541" y="1592">④一番下の面取り開くは①の範囲がなくなります。</text></g>
      <g class="note" fill="#fff100"><text x="1674" y="1833">最後はここをクリック</text></g>
    </svg>
  </div>
</template>

<style>
body { background: #fff; }
</style>

<style scoped>
*, *::before { box-sizing: border-box; }
.page { position: relative; padding: 386px 26px 388px 31px; font: 22px/28px "Noto Sans", "Noto Sans CJK JP", sans-serif; color: #000; }
.app { background: #f0f0f0; font-feature-settings: "palt"; }
button, input, select, textarea { font: inherit; font-feature-settings: inherit; color: inherit; border: 0; margin: 0; padding: 0; background: none; border-radius: 0; }
button { display: flex; align-items: center; justify-content: center; white-space: nowrap; }
s, u, em, i { text-decoration: none; display: block; flex: none; }

.title { display: flex; height: 4px; }
.title i:nth-child(1) { width: 758px; background: #7a7a7a; }
.title i:nth-child(2) { flex: 1; background: #2c3a4c; }
.title i:nth-child(3) { width: 709px; background: #757575; }
.title i:nth-child(4) { width: 257px; background: #26303a; }

.menubar { display: flex; height: 42px; background: linear-gradient(#f3f6f7, #dcdcdc 50%, #b8b8b8); }
.logo { flex: none; width: 86px; height: 38px; margin-top: -4px; border: 2px solid #111; background: linear-gradient(90deg, #8e8e8e, #c0c0c0 50%, #8e8e8e); text-align: center; font-size: 17px; line-height: 14px; }
.logo svg { display: block; width: 40px; height: 20px; margin-left: 12px; }
.menubar nav { display: grid; flex: 1; align-items: center; padding: 0 0 2px 28px; grid-template-columns: 137px 159px 191px 162px 136px 268px 262px 276px 228px 139px 204px 240px 212px 1fr; font-size: 25px; font-feature-settings: normal; }
.menubar a { color: #222; text-decoration: none; white-space: nowrap; }

.toolbar { display: flex; height: 80px; border-top: 2px solid #fff; }
.bar { display: flex; align-items: flex-start; padding-top: 6px; border-right: 2px solid #9c9c9c; }
.bar-main { width: 2597px; padding-left: 4px; border-left: 2px solid #ccc; }
.bar-axes { width: 378px; padding-left: 10px; }
.bar-snaps { width: 646px; padding-left: 12px; }
.bar > * { flex: none; }
.bar s { width: 12px; height: 44px; margin-top: 10px; background: linear-gradient(90deg, transparent 5px, #a8a8a8 5px, #a8a8a8 7px, transparent 7px); }
.bar u { width: 6px; height: 65px; margin-right: 2px; border: solid #a0a0a8; border-width: 0 2px; }
.tool { position: relative; width: 68px; height: 66px; padding-bottom: 3px; }
.tool svg { width: 50px; height: 48px; overflow: visible; }
.tool.wide { width: 77px; }
em { position: absolute; right: 4px; bottom: 4px; width: 0; height: 0; border: solid transparent; border-width: 0 0 6px 6px; border-bottom-color: #000; }
.green, .gold { width: 64px; margin: 0 2px; border: 2px solid #fff; border-top-color: #8f998f; border-left-color: #8f998f; background: #bdfcbd; }
.gold { background: #ecc64e; }

.sel { position: relative; display: block; background: linear-gradient(#eee, #dcdcdc); border: solid #8c8c8c; border-width: 3px 1px 1px 3px; border-right-color: #e4e4e4; border-bottom-color: #fff; }
.sel select { display: block; width: 100%; height: 100%; appearance: none; padding-left: 5px; }
.sel::after { content: ""; position: absolute; right: 8px; top: 50%; margin-top: -4px; border: solid transparent; border-width: 9px 8px 0; border-top-color: #000; pointer-events: none; }
.filter, .coord { width: 142px; height: 42px; }
.filter { margin-right: 4px; }
.set { width: 250px; height: 42px; margin-left: 2px; background: #fff; color: #888; }

.middle { display: flex; }
.left { display: flex; flex-direction: column; width: 83px; background: linear-gradient(90deg, #a0a0a0, #6f6f6f 80%, #5a5a5a); }
.left-top { height: 24px; background: #f4f4f4 linear-gradient(#aaa, #aaa) 6px 13px / 68px 3px no-repeat; }
.left-fill { flex: 1; }
.expand { width: 42px; height: 43px; margin-left: 20px; border: 2px solid #666; border-radius: 6px; background: #c6c6c6; }
.expand svg { width: 24px; }
.thumb { height: 92px; margin: 22px 0 4px 8px; padding: 15px 4px 20px 6px; border-radius: 8px 0 0 8px; border: 2px solid #4e6b7c; border-right: 0; background: linear-gradient(#a9b3b9 20%, #7fa3b8 80%, #9fdaf8); }
.thumb i { height: 54px; border: 2px solid #5c7280; background: linear-gradient(#87929a, #a1a6a6); }

.center { flex: 1; min-width: 0; }
.viewport { position: relative; height: 1814px; border: solid #fff100; border-width: 8px 5px 5px 6px; border-top-color: #e6df57; background: linear-gradient(#4b4b4b, #9e9e9e); box-shadow: inset 0 2px #6a6410; }
.scene { display: block; width: 100%; height: 100%; }
.axis-label { font: 22px "Liberation Sans", sans-serif; }
.vlabel { position: absolute; left: 6px; top: 7px; margin: 0; font: 22px/28px "Liberation Mono", "Noto Sans CJK JP", monospace; color: #d4d4d4; }
.caddy { position: absolute; left: 1780px; top: 813px; width: 170px; }
.caddy-title { display: flex; width: 120px; height: 71px; border-radius: 12px; background: #2d2d2d; color: #ddd; line-height: 30px; }
.caddy-title i { width: 6px; height: 34px; margin: 17px 12px 0 17px; border: solid #666; border-width: 0 2px; }
.pill { display: flex; align-items: center; width: 164px; height: 46px; margin-top: 15px; padding-left: 14px; gap: 14px; border: 2px solid #333; border-radius: 23px; background: linear-gradient(#c4c4c4, #a9a9a9); }
.pill + .pill { margin-top: 16px; }
.pill svg { flex: none; width: 34px; height: 34px; }
.pill input { width: 70px; font-size: 21px; }
.pill.short { justify-content: flex-start; width: 102px; gap: 10px; padding-left: 10px; background: #c4c4c4; }
.pill.short svg + svg { width: 28px; }
.caddy-actions { display: flex; gap: 15px; margin-top: 15px; }
.caddy-actions button { width: 46px; height: 46px; border: 2px solid #444; border-radius: 20px; background: #cdcdcd; }
.caddy-actions svg { width: 26px; height: 28px; }

.slider { display: flex; height: 38px; padding-left: 3px; background: #bfbfbf; }
.slider button { height: 35px; background: #f0f0f0; font-size: 20px; }
.step { width: 31px; }
.slider .knob { width: 264px; border: solid #000; border-width: 0 2px 3px 0; border-left: 2px solid #888; padding-top: 4px; }
.track { display: flex; height: 57px; border-top: 2px solid #fff; box-shadow: inset 0 2px #9a9a9a; padding-top: 2px; }
.mini { flex: none; width: 110px; padding-right: 16px; background: #f0f0f0; }
.mini svg { width: 40px; height: 36px; }
.ruler { flex: 1; min-width: 0; height: 53px; font-size: 20px; }

.panel { flex: none; width: 385px; height: 1909px; border-bottom: 2px solid #9a9a9a; }
.tabs { display: flex; gap: 3px; height: 60px; padding: 10px 0 0 5px; border-bottom: 2px solid #9a9a9a; }
.tabs button { width: 58px; border: 2px solid #a0a0a0; border-bottom: 0; border-radius: 6px 6px 0 0; background: #fff; }
.tabs .active { background: #f0f0f0; border-color: #d8d8d8; }
.tabs svg { width: 40px; height: 38px; }
.name-row { display: flex; gap: 10px; height: 42px; margin: 12px 0 0 23px; }
.name-row input { width: 306px; padding-left: 5px; border: solid #000; border-width: 3px 0 0 3px; background: #fff; }
.swatch { width: 36px; border-left: 2px solid #999; background: linear-gradient(#000 18px, #fff 18px); }
.modlist { width: 347px; height: 53px; margin: 11px 0 0 23px; background: #fff; }
.mod-grid { display: grid; grid-template-columns: 152px 152px; grid-auto-rows: 42px; gap: 6px; margin: 10px 0 0 36px; }
.btn { border: 2px solid #fff; border-right-color: #9c9c9c; border-bottom-color: #9c9c9c; background: #f0f0f0; }
.btn:disabled { color: #a0a0a0; }
.stack { width: 341px; height: 201px; margin: 18px 0 0 23px; padding: 0; list-style: none; border: 2px solid #888; background: #fff; }
.stack li { display: flex; align-items: center; height: 34px; padding-left: 14px; border-bottom: 2px solid #888; }
.stack svg { flex: none; width: 30px; height: 28px; }
.stack .cur { background: #eeec7c; }
.stack b { width: 20px; height: 20px; margin: 0 14px 0 12px; background: #000; color: #fff; font-size: 18px; line-height: 18px; text-align: center; }
.stack .end { width: 32px; height: 26px; margin: 0 8px 0 auto; }
.stack .deep { margin-left: 46px; }
.stack .base { margin-left: 32px; }
.stack-tools { display: flex; align-items: center; justify-content: space-between; height: 50px; margin: 8px 36px 0 26px; }
.stack-tools button { width: 44px; height: 48px; }
.stack-tools .down { border: solid #999; border-width: 2px 0 0 2px; }
.stack-tools svg { width: 34px; height: 32px; }
.stack-tools s { width: 2px; height: 34px; background: #aaa; }
hr { height: 3px; margin: 24px 8px 15px 9px; border: 0; background: #000; }

.scroll { display: flex; height: 1200px; margin: 0 12px 0 9px; padding-left: 4px; overflow: hidden; border-top: 2px solid #999; border-bottom: 2px solid #fff; }
.rolls { width: 346px; }
.scrollbar { width: 8px; margin-left: 5px; background: #000; }
.scrollbar i { height: 482px; margin-top: 249px; background: #9c9c9c; }
.roll { position: relative; }
.roll > * { position: relative; }
.roll.first { height: 250px; border: 2px solid #9c9c9c; border-top: 0; }
.roll.first .full { margin-left: 14px; }
.cut { height: 10px; margin-left: 14px; }
.full { width: 314px; height: 38px; margin: 10px 0 0 16px; }
fieldset { display: grid; min-width: 0; margin: 0; border: 2px solid #a0a0a0; }
legend { height: 24px; margin-left: -11px; padding: 0 4px; line-height: 24px; }
fieldset label { display: flex; align-items: center; gap: 14px; white-space: nowrap; }
.preview { margin: 10px 0 0 2px; padding: 6px 0 5px 24px; grid-template-columns: 105px 1fr; grid-auto-rows: 37px; }
.constraint { margin: 2px 6px 0 8px; padding: 4px 0 5px 26px; grid-template-columns: 126px 1fr; grid-auto-rows: 39px; }
input[type=radio] { flex: none; appearance: none; width: 20px; height: 20px; border-radius: 50%; border: 2px solid #eee; border-top-color: #808080; border-left-color: #808080; background: #fff; }
input[type=radio]:checked { background: radial-gradient(#000 5px, #fff 6px); }
input[type=checkbox] { flex: none; appearance: none; width: 24px; height: 24px; border: 3px solid #fff; border-top-color: #888; border-left-color: #888; background: #fff; }
.first p { margin: 0 18px 0 0; line-height: 36px; text-align: right; }
.closed { margin-top: 13px; }
.edges { margin-top: 9px; padding-bottom: 14px; }
.geo { margin-top: 15px; height: 600px; }
.roll.edges::before, .roll.geo::before { content: ""; position: absolute; inset: 17px 0 0; border: 2px solid #9c9c9c; }
.closed::before { content: ""; position: absolute; inset: 9px 0 7px; border: 2px solid #9c9c9c; }
.head { position: relative; width: 333px; height: 34px; margin-left: 7px; border: 2px solid #fff; border-right-color: #9c9c9c; border-bottom-color: #9c9c9c; background: #f0f0f0; }
.head b { position: absolute; left: 8px; font-weight: normal; font-size: 24px; }
.rows { display: grid; grid-auto-rows: 38px; gap: 11px; width: 314px; margin: 10px 0 0 16px; }
.geo .rows { margin-top: 7px; }
.pair { display: grid; grid-template-columns: 152px 152px; gap: 10px; }
.opt { display: grid; grid-template-columns: 120px 30px; gap: 2px; }
.opt.far { grid-template-columns: 275px 30px; gap: 9px; }
.over { width: 160px; }
.pair.tri { grid-template-columns: 160px 152px; gap: 2px; }
.box { position: relative; height: 38px; border: 2px solid #fff; border-right-color: #9c9c9c; border-bottom-color: #9c9c9c; }
.box::before { content: ""; width: 22px; height: 21px; border: 2px solid #000; border-top-width: 6px; }
.uv { display: flex; justify-content: space-between; margin: 16px 84px 0 40px; }
.uv label, .slice label { display: flex; align-items: center; gap: 13px; }
.uv .box { width: 30px; }
.slice { display: grid; grid-template-rows: 39px 38px 38px; gap: 9px; margin: 9px 6px 0 8px; padding: 9px 0 0 14px; height: 300px; align-content: start; border: 2px solid #a0a0a0; }
.slice .pair { grid-template-columns: 145px 156px; }
.slice .quick { grid-template-columns: 161px 136px; gap: 14px; margin-top: 2px; height: 38px; }

.status { display: flex; height: 105px; }
.macro { width: 225px; padding: 5px 19px 7px 4px; border-right: 2px solid #aaa; }
.pink, .white { height: 46px; border: solid #777; border-width: 3px 0 0 2px; background: #dcc4c6; }
.white { margin-top: 2px; padding-left: 8px; background: #fff; line-height: 34px; white-space: nowrap; overflow: hidden; }
.lines { flex: 1; min-width: 0; padding-top: 9px; border-left: 1px solid #aaa; }
.line { display: flex; height: 43px; }
.line + .line { margin-top: 9px; }
.field { flex: 1; height: 43px; border: solid #a0a0a0; border-width: 3px 0 0 2px; padding-left: 12px; line-height: 38px; font-size: 21px; box-shadow: inset -2px -2px #fff; }
.ic { position: relative; flex: none; width: 56px; height: 43px; }
.ic svg { width: 34px; height: 34px; }
.line label { display: flex; align-items: center; justify-content: flex-end; gap: 14px; width: 188px; font-size: 20px; }
.line label:first-of-type { width: 165px; }
.line label:last-child { margin-right: 26px; }
.line label input { width: 119px; height: 43px; border: solid #000; border-width: 3px 0 0 2px; background: #fff; }
.gridinfo { width: 212px; padding-top: 9px; }
.gridinfo .field + .field { margin-top: 9px; }
.keybtn { width: 92px; height: 92px; margin: 7px 9px 0 7px; }
.keybtn svg { width: 52px; height: 52px; }
.autokey { display: grid; grid-template-rows: 45px 46px; gap: 1px; width: 134px; padding-top: 7px; }
.keysel { width: 243px; margin: 7px 0 0 9px; }
.keysel .sel { width: 240px; height: 42px; border-color: #777; }
.keysel div { display: flex; margin-top: 5px; }
.keysel .ic { width: 44px; margin-right: 11px; }
.keysel .btn { flex: 1; height: 46px; }
.transport { width: 279px; padding: 8px 0 0 10px; border: 0; }
.transport div { display: flex; align-items: center; height: 43px; margin-bottom: 4px; }
.transport .ic { width: 48px; }
.transport .ic:first-child { width: 54px; }
.transport s { width: 2px; height: 34px; margin: 0 2px; background: #aaa; }
.transport input { width: 130px; height: 43px; margin-left: 1px; padding-left: 5px; border: solid #000; border-width: 3px 0 0 3px; background: #fff; font-size: 20px; }
.transport .spin { width: 24px; height: 34px; margin: 0 2px 0 5px; border: solid #999; border-width: 0 2px 2px 0; }
.spin svg { width: 12px; height: 24px; }
.nav { display: grid; grid-template-columns: repeat(4, 49px); grid-auto-rows: 43px; row-gap: 4px; width: 199px; padding-top: 8px; }
.nav .ic { width: 49px; }
.nav .ic em { right: 0; bottom: 2px; }

.notes { position: absolute; left: 0; top: 0; width: 100%; pointer-events: none; }
.note { font: 350 41px "Noto Sans CJK JP", sans-serif; }
</style>
